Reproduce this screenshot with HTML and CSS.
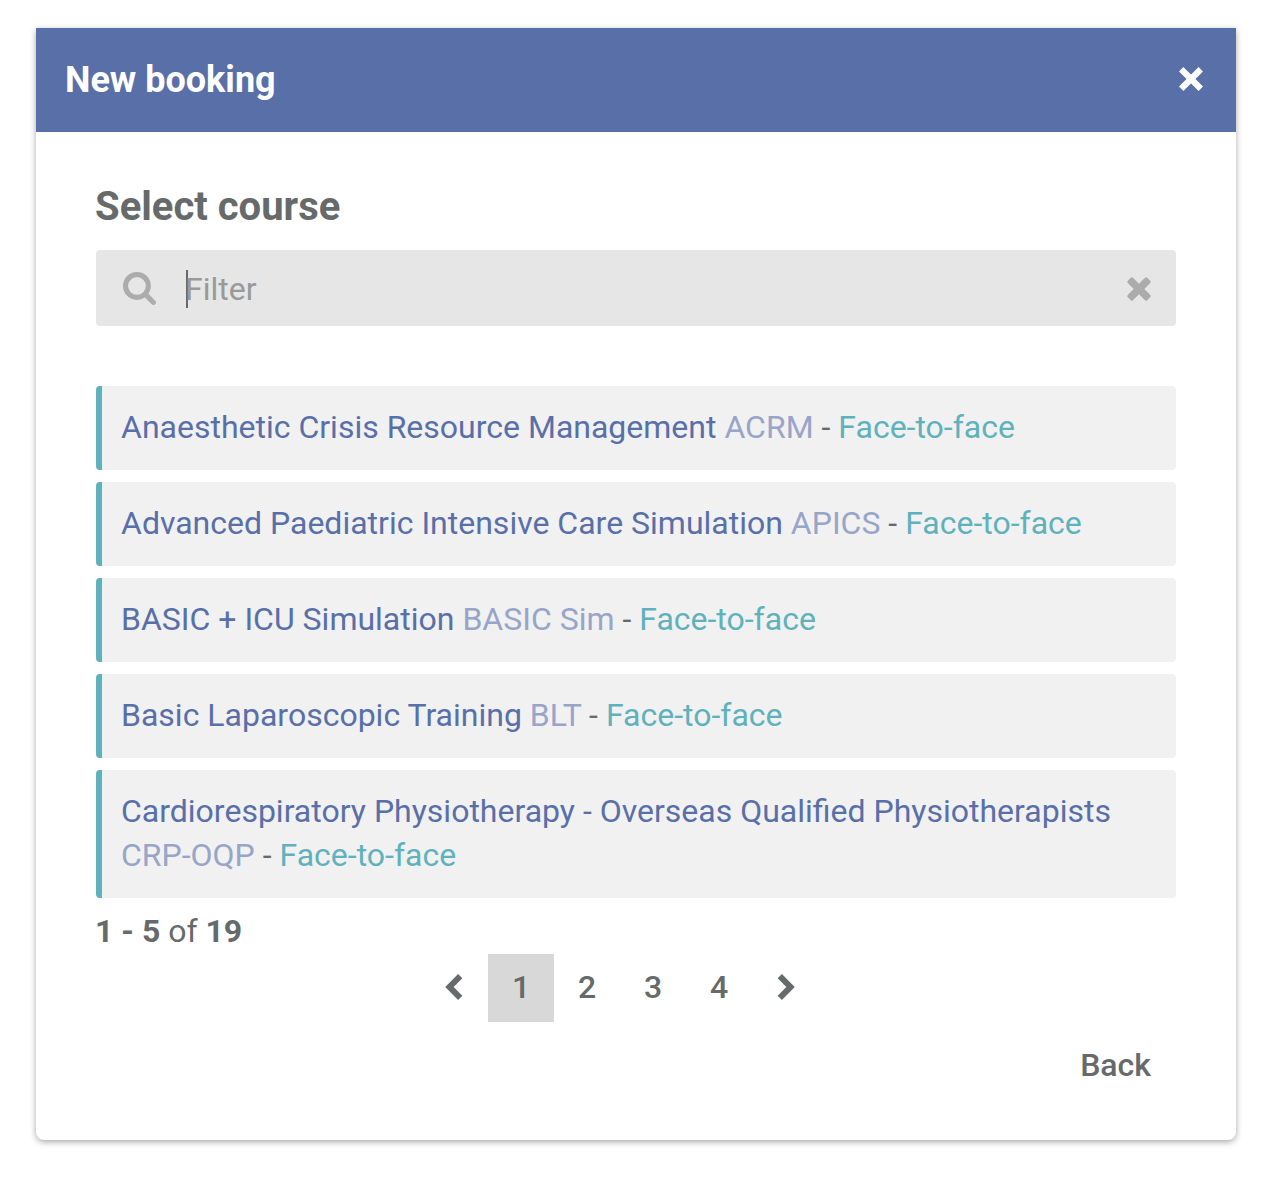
FILE: index.html
```html
<!DOCTYPE html>
<html lang="en">
<head>
<meta charset="utf-8">
<title>New booking</title>
<link rel="stylesheet" href="styles.css">
</head>
<body>
<main class="dialog">
  <header class="dialog-header">
    <h1 class="dialog-title">New booking</h1>
    <svg class="icon-close" viewBox="0 0 24 24" aria-label="Close"><path d="M2.200 2.200 21.800 21.800M21.800 2.200 2.200 21.800"/></svg>
  </header>
  <div class="dialog-body">
    <h2 class="section-title">Select course</h2>
    <div class="filter">
      <svg class="icon-search" viewBox="0 0 1664 1664"><path d="M1152 704q0-185-131.500-316.500T704 256 387.500 387.500 256 704t131.500 316.500T704 1152t316.500-131.500T1152 704zm512 832q0 52-38 90t-90 38q-54 0-90-38l-343-342q-179 124-399 124-143 0-273.500-55.500t-225-150-150-225T0 704t55.500-273.500 150-225 225-150T704 0t273.500 55.500 225 150 150 225T1408 704q0 220-124 399l343 343q37 37 37 90z"/></svg>
      <span class="filter-field">Filter</span>
      <svg class="icon-clear" viewBox="0 0 24 24" aria-label="Clear"><path d="M4.200 4.200 19.800 19.800M19.800 4.200 4.200 19.800" class="clear-core"/><path d="M3.800.800.800 3.800a1.500 1.500 0 0 0 0 2.100L6.900 12 .800 18.100a1.500 1.500 0 0 0 0 2.100l3 3a1.500 1.500 0 0 0 2.100 0L12 17.100l6.100 6.100a1.500 1.500 0 0 0 2.100 0l3-3a1.500 1.500 0 0 0 0-2.100L17.100 12l6.100-6.100a1.500 1.500 0 0 0 0-2.100l-3-3a1.500 1.500 0 0 0-2.100 0L12 6.900 5.900.800a1.500 1.500 0 0 0-2.100 0z"/></svg>
    </div>
    <ul class="courses">
      <li class="course"><span class="name">Anaesthetic Crisis Resource Management</span> <span class="code">ACRM</span> - <span class="mode">Face-to-face</span></li>
      <li class="course"><span class="name">Advanced Paediatric Intensive Care Simulation</span> <span class="code">APICS</span> - <span class="mode">Face-to-face</span></li>
      <li class="course"><span class="name">BASIC + ICU Simulation</span> <span class="code">BASIC Sim</span> - <span class="mode">Face-to-face</span></li>
      <li class="course"><span class="name">Basic Laparoscopic Training</span> <span class="code">BLT</span> - <span class="mode">Face-to-face</span></li>
      <li class="course"><span class="name">Cardiorespiratory Physiotherapy - Overseas Qualified Physiotherapists</span> <span class="code">CRP-OQP</span> - <span class="mode">Face-to-face</span></li>
    </ul>
    <p class="summary"><b>1 - 5</b> of <b>19</b></p>
    <nav class="pager">
      <span class="page page-prev"><svg class="chevron" viewBox="0 0 18 26"><path d="M15.200 2.200 4.500 13l10.700 10.800"/></svg></span>
      <span class="page page-current">1</span>
      <span class="page">2</span>
      <span class="page">3</span>
      <span class="page">4</span>
      <span class="page page-next"><svg class="chevron" viewBox="0 0 18 26"><path d="M2.800 2.200 13.500 13 2.800 23.800"/></svg></span>
    </nav>
    <div class="actions"><span class="back">Back</span></div>
  </div>
</main>
</body>
</html>
```
FILE: styles.css
```css
* { box-sizing: border-box; }
body {
  margin: 0;
  padding: 28px 34px 40px 36px;
  background: #fff;
  color: #666a6a;
  font: 32px/44px Roboto, "Liberation Sans", sans-serif;
}
h1, h2, p, ul { margin: 0; padding: 0; }
.dialog {
  width: 1200px;
  height: 1112px;
  border-radius: 2px 2px 8px 8px;
  background: #fff;
  box-shadow: 0 2px 6px rgba(0, 0, 0, .35);
}
.dialog-header {
  display: flex;
  align-items: center;
  justify-content: space-between;
  height: 104px;
  padding: 0 33px 0 29px;
  background: #596fa8;
  color: #fff;
}
.dialog-title { font-size: 36px; font-weight: 700; }
.icon-close { width: 24px; height: 24px; margin-bottom: 3px; fill: none; stroke: #fff; stroke-width: 6.200; }
.dialog-body { padding: 50px 60px 0; }
.section-title { height: 68px; margin-left: -1px; font-size: 40px; line-height: 50px; font-weight: 700; }
.filter {
  display: flex;
  align-items: center;
  height: 76px;
  padding: 1px 25px 0 27px;
  border-radius: 4px;
  background: #e6e6e6;
}
.icon-search { width: 33px; height: 33px; fill: #acacac; }
.filter-field {
  flex: 1;
  height: 38px;
  margin: 1px 0 0 30px;
  border-left: 2px solid #666a6a;
  line-height: 38px;
  text-indent: -3px;
  color: #999;
}
.icon-clear { width: 24px; height: 24px; fill: #acacac; }
.clear-core { stroke: #acacac; stroke-width: 7; }
.courses { display: flex; flex-direction: column; gap: 12px; margin-top: 60px; list-style: none; }
.course {
  padding: 19px 20px 21px 19px;
  border-left: 6px solid #5fb1bc;
  border-radius: 4px;
  background: #f1f1f1;
}
.name { color: #596fa8; }
.code { color: #98a5c9; }
.mode { color: #5fb1bc; }
.summary { height: 56px; margin-left: -1px; padding-top: 11px; }
.summary b { font-weight: 700; }
.pager { display: flex; height: 68px; margin-left: 326px; }
.page {
  display: flex;
  align-items: center;
  justify-content: center;
  width: 66px;
  height: 68px;
  padding-bottom: 2px;
  font-weight: 500;
}
.page-prev { padding-right: 2px; }
.page-next { padding-left: 2px; }
.page-current { background: #d8d8d8; }
.chevron { width: 18px; height: 26px; fill: none; stroke: #666a6a; stroke-width: 6; }
.actions { display: flex; justify-content: flex-end; padding: 21px 25px 0 0; font-weight: 500; }
```
